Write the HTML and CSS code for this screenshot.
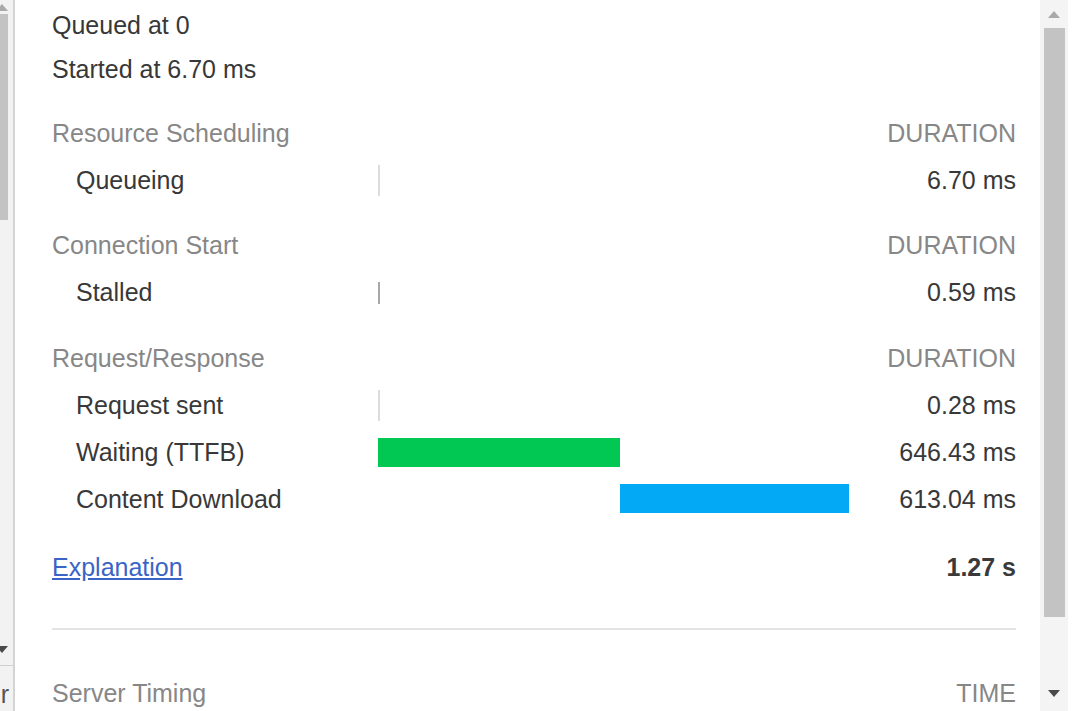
FILE: index.html
```html
<!DOCTYPE html>
<html>
<head>
<meta charset="utf-8">
<link rel="stylesheet" href="styles.css">
</head>
<body>
<div class="page">
  <div class="left-pane">
    <div class="lp-scroll">
      <div class="lp-up"><span class="tri-up light"></span></div>
      <div class="lp-thumb"></div>
      <div class="lp-space"></div>
      <div class="lp-down"><span class="tri-down"></span></div>
    </div>
    <div class="lp-row">r</div>
  </div>

  <div class="main">
    <div class="plain">Queued at 0</div>
    <div class="plain">Started at 6.70 ms</div>

    <div class="group">
      <div class="row head"><span class="label">Resource Scheduling</span><span></span><span class="val">DURATION</span></div>
      <div class="row"><span class="label sub">Queueing</span><span class="bars"><span class="tick light" style="margin-left:0px"></span></span><span class="val">6.70 ms</span></div>
    </div>

    <div class="group">
      <div class="row head"><span class="label">Connection Start</span><span></span><span class="val">DURATION</span></div>
      <div class="row"><span class="label sub">Stalled</span><span class="bars"><span class="tick dark" style="margin-left:0px"></span></span><span class="val">0.59 ms</span></div>
    </div>

    <div class="group last">
      <div class="row head"><span class="label">Request/Response</span><span></span><span class="val">DURATION</span></div>
      <div class="row"><span class="label sub">Request sent</span><span class="bars"><span class="tick light" style="margin-left:0px"></span></span><span class="val">0.28 ms</span></div>
      <div class="row"><span class="label sub">Waiting (TTFB)</span><span class="bars"><span class="bar green" style="margin-left:0px;width:242px"></span></span><span class="val">646.43 ms</span></div>
      <div class="row sub-last"><span class="label sub">Content Download</span><span class="bars"><span class="bar blue" style="margin-left:242px;width:229px"></span></span><span class="val">613.04 ms</span></div>
    </div>

    <div class="row total"><a class="link" href="#">Explanation</a><span></span><span class="val bold">1.27 s</span></div>

    <div class="divider"></div>

    <div class="row head server"><span class="label">Server Timing</span><span></span><span class="val">TIME</span></div>
  </div>

  <div class="right-scroll">
    <div class="rs-up"><span class="tri-up light"></span></div>
    <div class="rs-thumb"></div>
    <div class="rs-space"></div>
    <div class="rs-down"><span class="tri-down"></span></div>
  </div>
  <div class="right-gap"></div>
</div>
</body>
</html>
```

FILE: styles.css
```css
html, body {
  margin: 0;
  padding: 0;
  background: #ffffff;
}
body {
  font-family: "Liberation Sans", Arial, sans-serif;
  font-size: 25px;
  color: #383838;
  width: 1080px;
  height: 711px;
  overflow: hidden;
}
.page {
  display: flex;
  height: 711px;
}

/* left pane */
.left-pane {
  width: 13px;
  flex: none;
  background: #f2f2f2;
  border-right: 2px solid #d4d4d4;
  display: flex;
  flex-direction: column;
}
.lp-scroll {
  height: 665px;
  display: flex;
  flex-direction: column;
}
.lp-up {
  height: 14px;
  display: flex;
  align-items: center;
  margin-left: -4px;
}
.lp-thumb {
  width: 8px;
  height: 206px;
  background: #c3c3c3;
}
.lp-space { flex: 1; }
.lp-down {
  height: 16px;
  display: flex;
  align-items: center;
  margin-left: -4px;
  margin-bottom: 8px;
}
.lp-row {
  border-top: 1px solid #cfcfcf;
  flex: 1;
  display: flex;
  justify-content: flex-end;
  align-items: center;
  overflow: hidden;
  color: #555;
  padding-top: 12px;
  padding-right: 4px;
  line-height: 1;
}

/* main */
.main {
  flex: 1;
  padding: 3px 24px 0 37px;
  overflow: hidden;
}
.plain {
  height: 44px;
  line-height: 44px;
  white-space: nowrap;
}
.group {
  margin-top: 19px;
}
.group + .group {
  margin-top: 18px;
}
.group.last {
  margin-top: 19px;
}
.row {
  display: grid;
  grid-template-columns: 326px 471px 1fr;
  height: 47px;
  align-items: center;
  white-space: nowrap;
}
.head {
  color: #878787;
}
.sub {
  padding-left: 24px;
}
.val {
  text-align: right;
}
.bold {
  font-weight: bold;
  color: #3a3a3a;
}
.bars {
  display: flex;
  align-items: center;
  height: 47px;
}
.tick {
  width: 2px;
  flex: none;
}
.tick.light {
  height: 31px;
  background: #dcdcdc;
}
.tick.dark {
  height: 22px;
  background: #a8a8a8;
}
.bar {
  height: 29px;
  flex: none;
}
.sub-last .bar {
  margin-top: -2px;
}
.green { background: #00c853; }
.blue { background: #03a9f4; }

.total {
  margin-top: 21px;
}
.link {
  color: #3a64c6;
  text-decoration: underline;
}
.divider {
  margin-top: 37px;
  height: 2px;
  background: #e3e3e3;
}
.server {
  margin-top: 40px;
}

/* right scrollbar */
.right-scroll {
  width: 28px;
  flex: none;
  background: #f4f4f4;
  display: flex;
  flex-direction: column;
  align-items: center;
}
.rs-up {
  height: 28px;
  display: flex;
  align-items: center;
  justify-content: center;
}
.rs-thumb {
  width: 21px;
  height: 589px;
  background: #c3c3c3;
}
.rs-space { flex: 1; }
.rs-down {
  height: 20px;
  margin-bottom: 8px;
  display: flex;
  align-items: center;
  justify-content: center;
}
.right-gap {
  width: 12px;
  flex: none;
}

.tri-up {
  width: 0;
  height: 0;
  border-left: 6px solid transparent;
  border-right: 6px solid transparent;
  border-bottom: 7px solid #555;
}
.tri-up.light {
  border-bottom-color: #a9a9a9;
}
.tri-down {
  width: 0;
  height: 0;
  border-left: 6px solid transparent;
  border-right: 6px solid transparent;
  border-top: 7px solid #4a4a4a;
}
```
